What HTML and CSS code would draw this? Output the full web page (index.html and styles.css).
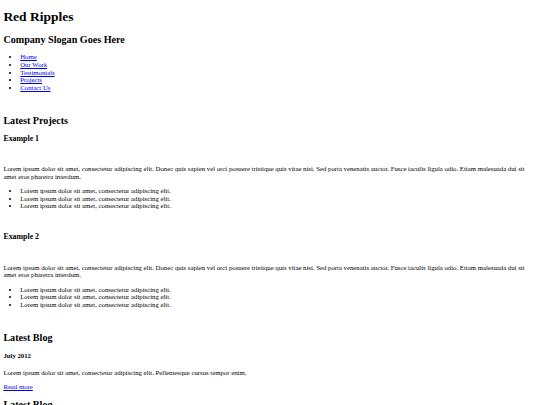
FILE: index.html
```html
<!DOCTYPE html>
<html lang="en">
<head>
<meta charset="utf-8">
<title>Red Ripples</title>
<link rel="stylesheet" href="styles.css">
</head>
<body>
<header class="site-header">
  <h1 class="site-title">Red Ripples</h1>
  <h2>Company Slogan Goes Here</h2>
  <ul class="nav">
    <li><a href="#">Home</a></li>
    <li><a href="#">Our Work</a></li>
    <li><a href="#">Testimonials</a></li>
    <li><a href="#">Projects</a></li>
    <li><a href="#">Contact Us</a></li>
  </ul>
</header>
<section class="projects">
  <h2>Latest Projects</h2>
  <article class="project">
    <h3>Example 1</h3>
    <div class="thumb"></div>
    <p>Lorem ipsum dolor sit amet, consectetur adipiscing elit. Donec quis sapien vel orci posuere tristique quis vitae nisi. Sed porta venenatis auctor. Fusce iaculis ligula odio. Etiam malesuada dui sit amet eros pharetra interdum.</p>
    <ul>
      <li>Lorem ipsum dolor sit amet, consectetur adipiscing elit.</li>
      <li>Lorem ipsum dolor sit amet, consectetur adipiscing elit.</li>
      <li>Lorem ipsum dolor sit amet, consectetur adipiscing elit.</li>
    </ul>
  </article>
  <article class="project">
    <h3>Example 2</h3>
    <div class="thumb"></div>
    <p>Lorem ipsum dolor sit amet, consectetur adipiscing elit. Donec quis sapien vel orci posuere tristique quis vitae nisi. Sed porta venenatis auctor. Fusce iaculis ligula odio. Etiam malesuada dui sit amet eros pharetra interdum.</p>
    <ul>
      <li>Lorem ipsum dolor sit amet, consectetur adipiscing elit.</li>
      <li>Lorem ipsum dolor sit amet, consectetur adipiscing elit.</li>
      <li>Lorem ipsum dolor sit amet, consectetur adipiscing elit.</li>
    </ul>
  </article>
</section>
<section class="blog">
  <h2>Latest Blog</h2>
  <h4>July 2012</h4>
  <p>Lorem ipsum dolor sit amet, consectetur adipiscing elit. Pellentesque cursus tempor enim.</p>
  <p><a href="#">Read more</a></p>
  <h2>Latest Blog</h2>
  <h4>July 2012</h4>
  <p>Lorem ipsum dolor sit amet, consectetur adipiscing elit. Pellentesque cursus tempor enim.</p>
  <p><a href="#">Read more</a></p>
</section>
</body>
</html>
```
FILE: styles.css
```css
html {
  font-size: 6.75px;
}
body {
  margin: 0.5em;
  font-family: "Liberation Serif", "Times New Roman", serif;
  line-height: 1.125;
  color: #000;
  background: #fff;
}
.site-title {
  margin-top: 0.45em;
}
ul {
  padding-left: 2.5em;
}
a {
  color: #0000ee;
}
.site-header,
.project {
  padding-bottom: 1.25em;
}
.thumb {
  height: 1.05em;
  margin: 1em 0;
}
```
